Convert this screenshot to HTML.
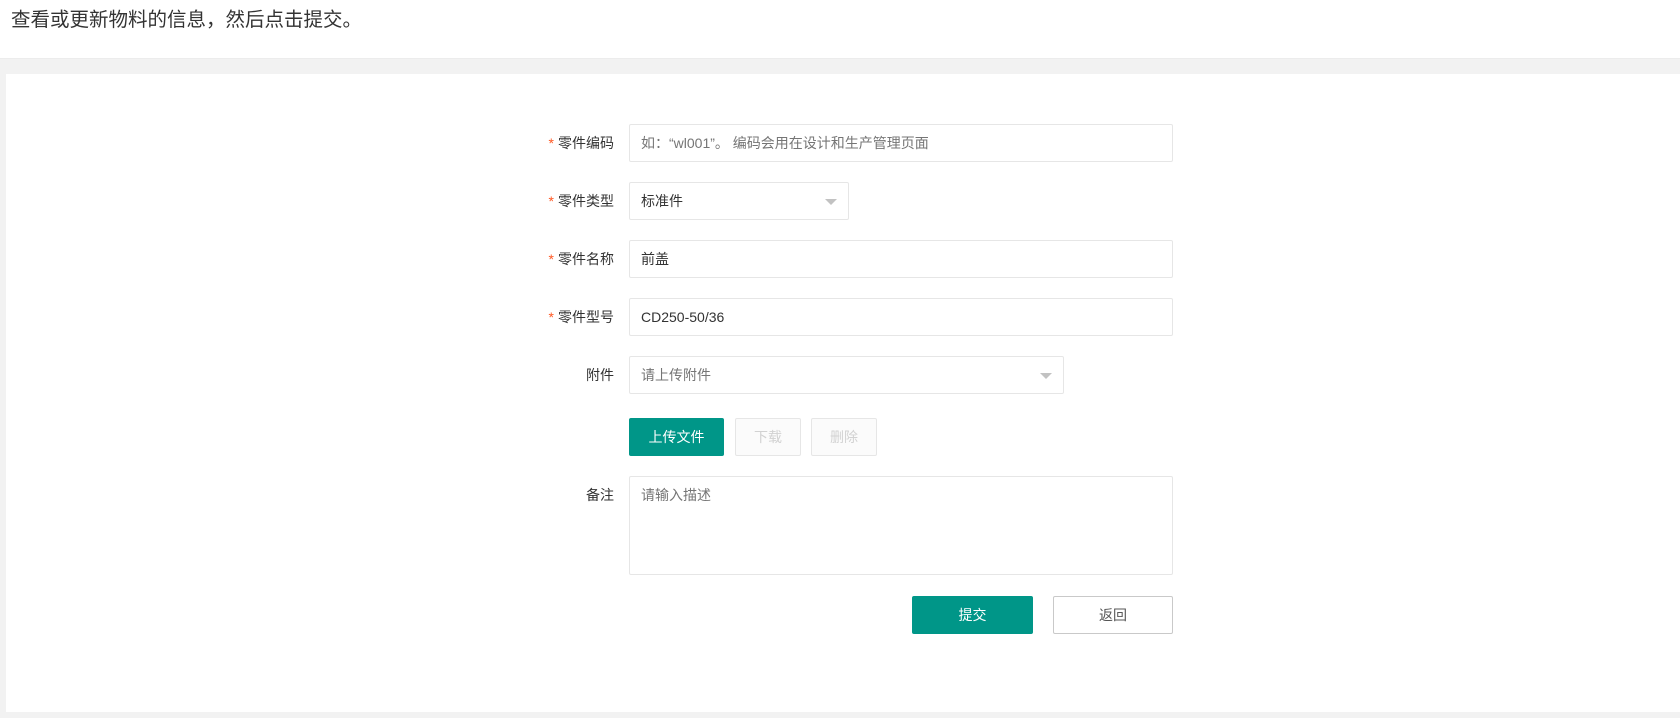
<!DOCTYPE html>
<html><head><meta charset="utf-8"><style>
*{box-sizing:border-box;margin:0;padding:0}
body{width:1680px;height:718px;background:#f2f2f2;font-family:"Liberation Sans","Noto Sans CJK SC",sans-serif;font-size:14px;color:#333;position:relative;overflow:hidden}
.hd{position:absolute;left:0;top:0;width:1680px;height:59px;background:#fff;border-bottom:1px solid #ececec}
.hd span{position:absolute;left:11px;top:7px;font-size:19.5px;color:#333;line-height:26px}
.panel{position:absolute;left:6px;top:74px;width:1674px;height:638px;background:#fff}
.lbl{position:absolute;right:1066px;width:120px;text-align:right;line-height:38px;color:#333}
.lbl i{font-style:normal;color:#ff5722;margin-right:4px}
.inp{position:absolute;left:629px;height:38px;border:1px solid #e6e6e6;border-radius:2px;background:#fff;line-height:36px;padding-left:11px;color:#333}
.ph{color:#757575}
.arr{position:absolute;top:16px;width:0;height:0;border-left:6px solid transparent;border-right:6px solid transparent;border-top:6px solid #c2c2c2}
.btn{position:absolute;height:38px;line-height:38px;text-align:center;border-radius:2px;font-size:14px}
.g{background:#009688;color:#fff}
.dis{background:#fbfbfb;border:1px solid #e6e6e6;color:#d2d2d2;line-height:36px}
.w{background:#fff;border:1px solid #c9c9c9;color:#555;line-height:36px}
</style></head><body>
<div class="hd"><span>查看或更新物料的信息，然后点击提交。</span></div>
<div class="panel"></div>

<div class="lbl" style="top:124px"><i>*</i>零件编码</div>
<div class="inp ph" style="top:124px;width:544px">如：“wl001”。 编码会用在设计和生产管理页面</div>

<div class="lbl" style="top:182px"><i>*</i>零件类型</div>
<div class="inp" style="top:182px;width:220px">标准件<div class="arr" style="left:195px"></div></div>

<div class="lbl" style="top:240px"><i>*</i>零件名称</div>
<div class="inp" style="top:240px;width:544px">前盖</div>

<div class="lbl" style="top:298px"><i>*</i>零件型号</div>
<div class="inp" style="top:298px;width:544px">CD250-50/36</div>

<div class="lbl" style="top:356px">附件</div>
<div class="inp ph" style="top:356px;width:435px">请上传附件<div class="arr" style="left:410px"></div></div>

<div class="btn g" style="left:629px;top:418px;width:95px">上传文件</div>
<div class="btn dis" style="left:735px;top:418px;width:66px">下载</div>
<div class="btn dis" style="left:811px;top:418px;width:66px">删除</div>

<div class="lbl" style="top:476px">备注</div>
<div class="inp ph" style="top:476px;width:544px;height:99px;line-height:20px;padding-top:8px">请输入描述</div>

<div class="btn g" style="left:912px;top:596px;width:121px">提交</div>
<div class="btn w" style="left:1053px;top:596px;width:120px">返回</div>
</body></html>
